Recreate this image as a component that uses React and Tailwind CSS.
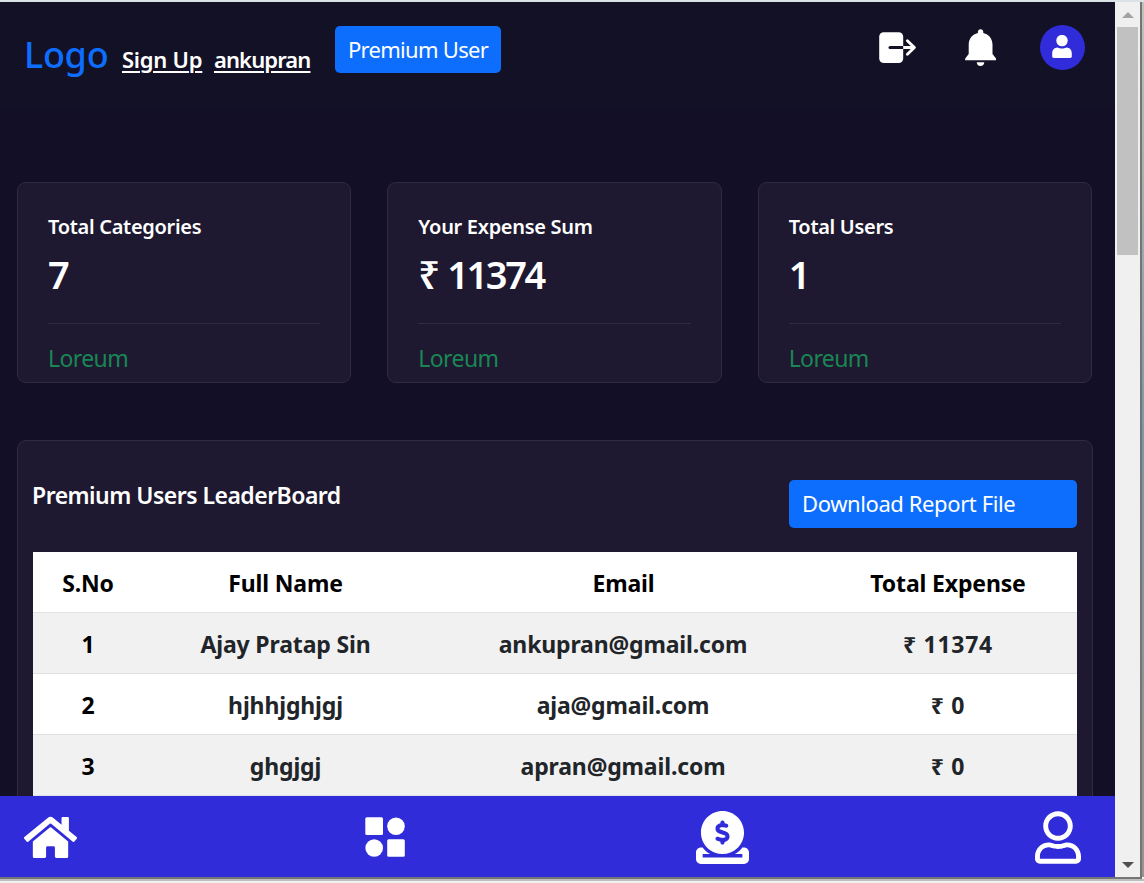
import React from "react";
import { FaHome, FaRegUser } from "react-icons/fa";
import { FaCircleDollarToSlot } from "react-icons/fa6";

const stats = [
  { title: "Total Categories", value: "7" },
  { title: "Your Expense Sum", value: "₹ 11374" },
  { title: "Total Users", value: "1" },
];

const rows = [
  ["1", "Ajay Pratap Sin", "ankupran@gmail.com", "₹ 11374"],
  ["2", "hjhhjghjgj", "aja@gmail.com", "₹ 0"],
  ["3", "ghgjgj", "apran@gmail.com", "₹ 0"],
];

function LogoutIcon() {
  return (
    <svg width="38" height="32" viewBox="0 0 38 32" fill="none">
      <rect x="0.2" y="0.2" width="24" height="30.8" rx="4.5" fill="#fff" />
      <path d="M11 15.5H24.2" stroke="#131126" strokeWidth="3" strokeLinecap="round" />
      <path d="M24.2 15.5H35" stroke="#fff" strokeWidth="3" />
      <path d="M28.4 8.700L35.400 15.500L28.400 22.300" stroke="#fff" strokeWidth="2.900" strokeLinecap="round" strokeLinejoin="round" />
    </svg>
  );
}

function BellIcon() {
  return (
    <svg width="32" height="38" viewBox="0 0 32 38" fill="#fff">
      <path d="M15.6 0.2C17.3 0.2 18.3 1.4 18.3 3V3.9C24 5.2 27.4 9.500 27.500 15.500V25L31 29.400V31.300H0.200V29.400L3.700 25V15.500C3.800 9.500 7.200 5.200 12.900 3.900V3C12.900 1.400 13.900 0.200 15.600 0.200Z" />
      <path d="M11.700 33.300H19.300C19.100 35.600 17.800 37 15.500 37C13.200 37 11.900 35.600 11.700 33.300Z" />
    </svg>
  );
}

function AvatarIcon() {
  return (
    <svg className="mr-px" width="20" height="24" viewBox="0 0 20 24" fill="#fff">
      <circle cx="10" cy="5.600" r="5.700" />
      <path d="M5.500 12.400C7 13.200 8.400 13.500 10 13.500C11.600 13.500 13 13.200 14.500 12.400C17.800 12.500 19.800 15 19.800 18.200V21.200C19.800 22.200 19.200 22.900 18.200 22.900H1.800C0.800 22.900 0.200 22.200 0.200 21.200V18.200C0.200 15 2.200 12.500 5.500 12.400Z" />
    </svg>
  );
}

function GridIcon() {
  return (
    <svg className="ml-[2px]" width="40" height="40" viewBox="0 0 40 40" fill="#fff">
      <rect x="0.300" y="0.300" width="17.700" height="17.700" rx="1.500" />
      <circle cx="31" cy="9.200" r="8.800" />
      <circle cx="9.200" cy="31" r="8.800" />
      <rect x="22.200" y="22.200" width="17.600" height="17.600" rx="1.500" />
    </svg>
  );
}

function Header() {
  return (
    <header className="flex h-[107px] shrink-0 items-start justify-between bg-[#131126] pr-[30px] pl-[25px] text-white">
      <div className="flex items-start whitespace-nowrap">
        <a className="mt-[28px] ml-[-1px] w-[98px] text-[36px] leading-[50px] font-[550] tracking-[-0.3px] text-[#0d6efd]">Logo</a>
        <a className="mt-[41px] w-[92px] text-[22px] leading-[32px] font-semibold tracking-[-0.25px] underline decoration-2 underline-offset-[3px]">Sign Up</a>
        <a className="mt-[41px] w-[121px] text-[22px] leading-[32px] font-semibold tracking-[-0.9px] underline decoration-2 underline-offset-[3px]">ankupran</a>
        <button className="mt-[24px] flex h-[47px] w-[166px] items-center justify-center rounded-[5px] bg-[#0d6efd] text-[22px] tracking-[-0.7px]">Premium User</button>
      </div>
      <div className="flex items-start">
        <div className="mt-[30px] mr-[48px]"><LogoutIcon /></div>
        <div className="mt-[27px] mr-[43px]"><BellIcon /></div>
        <div className="mt-[23px] flex h-[45px] w-[45px] justify-center rounded-full bg-[#302cd9] pt-[10px]"><AvatarIcon /></div>
      </div>
    </header>
  );
}

function StatCard({ title, value }) {
  return (
    <section className="h-[201px] rounded-[9px] border border-[#302b42] bg-[#1e1930] px-[30px] pt-[28px] whitespace-nowrap">
      <h3 className="text-[20px] leading-[32px] font-semibold tracking-[-0.3px] text-white">{title}</h3>
      <p className="mt-[6px] text-[38px] leading-[50px] font-semibold tracking-[-2.4px] text-white [word-spacing:2px]">{value}</p>
      <div className="mt-[24px] h-px bg-[#302b42]" />
      <p className="mt-[16px] text-[23px] leading-[36px] tracking-[-0.6px] text-[#198754]">Loreum</p>
    </section>
  );
}

function Leaderboard() {
  return (
    <section className="mt-[57px] mr-[22px] ml-[17px] h-[400px] rounded-[9px] border border-[#302b42] bg-[#1e1930] px-[15px] whitespace-nowrap">
      <div className="flex justify-between">
        <h2 className="mt-[37px] ml-[-1px] text-[23px] leading-[34px] font-semibold tracking-[-0.52px] text-white">Premium Users LeaderBoard</h2>
        <button className="mt-[39px] h-[48px] w-[288px] rounded-[5px] bg-[#0d6efd] pb-[2px] pl-[13px] text-left text-[22px] tracking-[-0.4px] text-white">Download Report File</button>
      </div>
      <table className="mt-[24px] w-full table-fixed border-collapse bg-white text-center text-[23px] font-bold tracking-[-0.15px] text-[#212529]">
        <colgroup>
          <col className="w-[110px]" />
          <col className="w-[285px]" />
          <col className="w-[391px]" />
          <col className="w-[258px]" />
        </colgroup>
        <thead>
          <tr className="h-[60px] border-b border-[#dee2e6] text-black">
            {["S.No", "Full Name", "Email", "Total Expense"].map((h) => (
              <th key={h} className="p-0 pt-[3px] leading-[36px]">{h}</th>
            ))}
          </tr>
        </thead>
        <tbody>
          {rows.map((r) => (
            <tr key={r[0]} className="h-[61px] border-b border-[#dee2e6] odd:bg-[#f1f1f1]">
              <td className="p-0 pt-[2px] leading-[36px] text-black">{r[0]}</td>
              <td className="p-0 pt-[2px] leading-[36px]">{r[1]}</td>
              <td className="p-0 pt-[2px] pr-px leading-[36px]">{r[2]}</td>
              <td className="p-0 pt-[2px] leading-[36px] tracking-[0.7px]">{r[3]}</td>
            </tr>
          ))}
        </tbody>
      </table>
    </section>
  );
}

function BottomNav() {
  return (
    <nav className="flex h-[81px] shrink-0 items-center justify-between bg-[#302cd9] pt-px pr-[34px] pl-[24px] text-white">
      <FaHome className="h-[53px] w-[53px]" />
      <GridIcon />
      <FaCircleDollarToSlot className="ml-[4px] h-[53px] w-[53px]" />
      <FaRegUser className="h-[53px] w-[46px]" />
    </nav>
  );
}

function Scrollbar() {
  return (
    <div className="flex w-[25px] flex-col items-center justify-between bg-[#f0f0f0]">
      <div className="flex flex-col items-center">
        <svg className="mt-[10px]" width="12" height="6" viewBox="0 0 12 6"><path d="M6 0L12 6H0Z" fill="#a3a3a3" /></svg>
        <div className="mt-[9px] mr-[2px] ml-px h-[228px] w-[21px] bg-[#c1c1c1]" />
      </div>
      <svg className="mb-[9px]" width="12" height="6" viewBox="0 0 12 6"><path d="M0 0H12L6 6Z" fill="#505050" /></svg>
    </div>
  );
}

export default function App() {
  return (
    <div className="flex h-[883px] w-[1144px] flex-col overflow-hidden border-t-2 border-[#dbe3e6] bg-[#f0f0f0] font-['Noto_Sans','Open_Sans',sans-serif]">
      <div className="flex h-[875px] shrink-0">
        <div className="flex w-[1115px] flex-col bg-[#120f26]">
          <Header />
          <main className="h-[687px] overflow-hidden pt-[73px]">
            <div className="grid grid-cols-3 gap-[36px] pr-[23px] pl-[17px]">
              {stats.map((s) => <StatCard key={s.title} {...s} />)}
            </div>
            <Leaderboard />
          </main>
          <BottomNav />
        </div>
        <Scrollbar />
        <div className="w-[2px] bg-[#757575]" />
        <div className="w-[2px] bg-linear-to-b from-[#bfc4ba] via-[#7c99a4] to-[#9c9291]" />
      </div>
      <div className="h-[2px] w-[1142px] shrink-0 bg-[#757575]" />
      <div className="h-[2px] shrink-0 bg-[#bdbdbd]" />
    </div>
  );
}
